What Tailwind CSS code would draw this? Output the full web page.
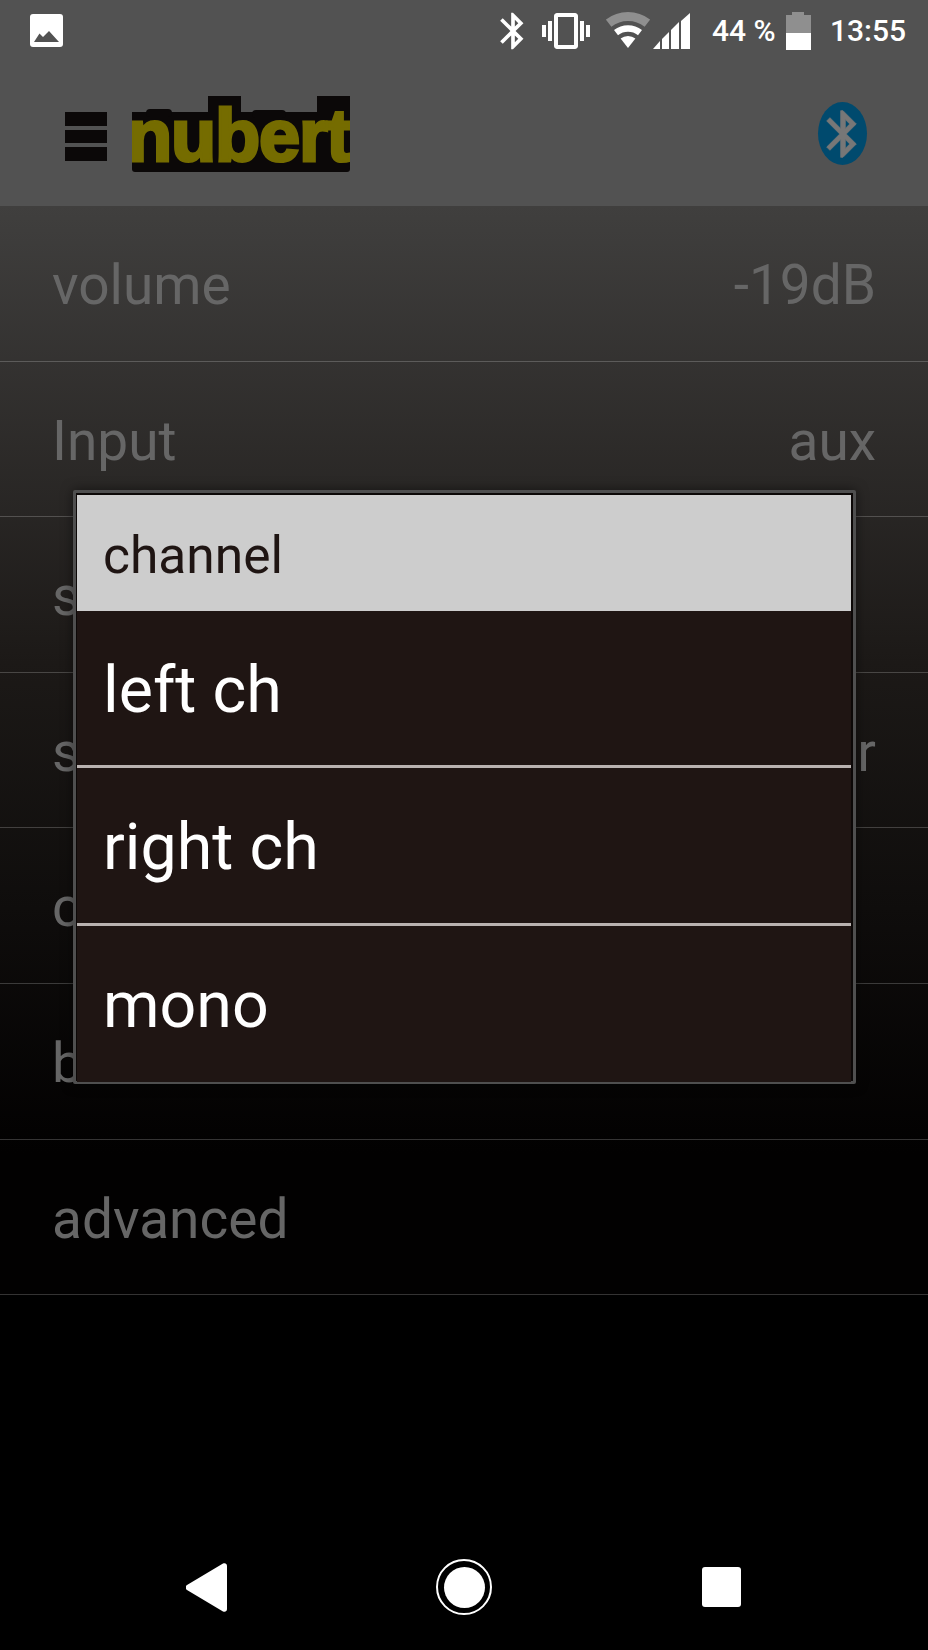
<!DOCTYPE html>
<html lang="en">
<head>
  <meta charset="UTF-8">
  <meta name="viewport" content="width=device-width, initial-scale=1.0">
  <title>nubert</title>
  <script src="https://cdn.jsdelivr.net/npm/@tailwindcss/browser@4"></script>
</head>
<body class="bg-black font-[Roboto,sans-serif]">
  <div class="relative w-[928px] h-[1650px] overflow-hidden flex flex-col bg-black">

    <!-- Status bar -->
    <div class="h-[62px] bg-[#525252] flex items-start text-white relative">
      <svg class="ml-[30px] mt-[14px]" width="33" height="33" viewBox="0 0 33 33">
        <rect width="33" height="33" rx="3" fill="#fff"/>
        <path d="M4 28 9.5 19.5 13 23 19 17 29 28Z" fill="#525252"/>
      </svg>
      <div class="ml-auto flex items-start">
        <svg class="mt-[9px]" width="44" height="44" viewBox="0 0 24 24" fill="#fff">
          <path d="M17.71 7.71L12 2h-1v7.59L6.41 5 5 6.41 10.59 12 5 17.59 6.41 19 11 14.41V22h1l5.71-5.71-4.3-4.29 4.3-4.29zM13 5.83l1.88 1.88L13 9.59V5.83zm1.88 10.46L13 18.17v-3.76l1.88 1.88z"/>
        </svg>
        <svg class="mt-[7px] ml-[7px]" width="48" height="48" viewBox="0 0 24 24" fill="#fff">
          <path d="M0 15h2V9H0v6zm3 2h2V7H3v10zm19-8v6h2V9h-2zm-3 8h2V7h-2v10zM16.5 3h-9C6.67 3 6 3.67 6 4.5v15c0 .83.67 1.5 1.5 1.5h9c.83 0 1.5-.67 1.5-1.5v-15c0-.83-.67-1.5-1.5-1.5zM16 19H8V5h8v14z"/>
        </svg>
        <svg class="mt-[12px] ml-[16px]" width="44" height="37" viewBox="0 0 44 37" fill="none">
          <path d="M2.6 11.2A31.5 31.5 0 0 1 41.4 11.2" stroke="#8f8f8f" stroke-width="9"/>
          <path d="M10 20.6A19.5 19.5 0 0 1 34 20.6" stroke="#fff" stroke-width="6.5"/>
          <path d="M22 36 14.6 26.5A12 12 0 0 1 29.4 26.5Z" fill="#fff"/>
        </svg>
        <svg class="mt-[13px] ml-[3px]" width="37" height="36" viewBox="0 0 37 36" fill="#fff">
          <path d="M0 36 7 28V36Z"/>
          <path d="M9 26 16 19V36H9Z"/>
          <path d="M18 17 26 9V36H18Z"/>
          <path d="M28 8 37 0V36H28Z"/>
        </svg>
        <span class="ml-[22px] mt-[11px] text-[30px] leading-[40px] font-medium w-[64px] whitespace-nowrap">44 %</span>
        <svg class="ml-[10px] mt-[12px]" width="25" height="38" viewBox="0 0 25 38">
          <path d="M6 0H18V3H25V21H0V3H6Z" fill="#8f8f8f"/>
          <rect y="21" width="25" height="17" fill="#fff"/>
        </svg>
        <span class="ml-[19px] mr-[22px] mt-[11px] text-[30px] leading-[40px] font-medium">13:55</span>
      </div>
    </div>

    <!-- Toolbar -->
    <div class="h-[144px] bg-[#525252] flex items-start">
      <div class="ml-[65px] mt-[50px] w-[42px] flex flex-col gap-[4px]">
        <div class="h-[14px] bg-[#0b0808]"></div>
        <div class="h-[13px] bg-[#0b0808]"></div>
        <div class="h-[14px] bg-[#0b0808]"></div>
      </div>
      <div class="relative ml-[25px] mt-[34px] w-[218px] h-[76px] overflow-hidden">
        <div class="absolute left-0 right-0 top-[16px] bottom-0 bg-[#0b0808] rounded-b-[3px]"></div>
        <div class="absolute left-[76px] top-0 w-[33px] h-[20px] bg-[#0b0808]"></div>
        <div class="absolute left-[185px] top-0 w-[33px] h-[20px] bg-[#0b0808]"></div>
        <div class="absolute left-[14px] top-[13px] w-[26px] h-[8px] rounded-full bg-[#0b0808]"></div>
        <div class="absolute left-[120px] top-[14px] w-[34px] h-[8px] rounded-full bg-[#0b0808]"></div>
        <span class="absolute left-[-5px] top-[-6px] text-[74px] leading-[92px] font-bold font-['Liberation_Sans',sans-serif] tracking-[-1.2px] text-[#756c00] [-webkit-text-stroke:3px_#756c00] whitespace-nowrap">nubert</span>
      </div>
      <div class="ml-auto mr-[61px] mt-[40px] relative w-[49px] h-[63px] rounded-[50%] bg-[#004a6e] flex items-center justify-center">
        <svg class="shrink-0" width="56" height="56" viewBox="0 0 24 24" fill="#777777" stroke="#777777" stroke-width="0.3">
          <path d="M17.71 7.71L12 2h-1v7.59L6.41 5 5 6.41 10.59 12 5 17.59 6.41 19 11 14.41V22h1l5.71-5.71-4.3-4.29 4.3-4.29zM13 5.83l1.88 1.88L13 9.59V5.83zm1.88 10.46L13 18.17v-3.76l1.88 1.88z"/>
        </svg>
      </div>
    </div>

    <!-- Settings list -->
    <div class="bg-linear-to-b/srgb from-[#403f3e] via-[#1c1917] via-[42%] to-[#020101] to-[87%] text-[#666666] text-[55px]">
      <div class="h-[155.6px] pt-[4px] px-[52px] flex items-center justify-between border-b border-white/20"><span>volume</span><span>-19dB</span></div>
      <div class="h-[155.6px] pt-[4px] px-[52px] flex items-center justify-between border-b border-white/20"><span>Input</span><span>aux</span></div>
      <div class="h-[155.6px] pt-[4px] px-[52px] flex items-center justify-between border-b border-white/20"><span>source</span></div>
      <div class="h-[155.6px] pt-[4px] px-[52px] flex items-center justify-between border-b border-white/20"><span>speaker</span><span>woofer</span></div>
      <div class="h-[155.6px] pt-[4px] px-[52px] flex items-center justify-between border-b border-white/20"><span>channel</span></div>
      <div class="h-[155.6px] pt-[4px] px-[52px] flex items-center justify-between border-b border-white/20"><span>balance</span></div>
      <div class="h-[155.6px] pt-[4px] px-[52px] flex items-center justify-between border-b border-white/20"><span>advanced</span></div>
    </div>

    <!-- Navigation bar -->
    <div class="mt-auto h-[126px] w-[774px] mx-auto grid grid-cols-3 items-center justify-items-center">
      <svg width="41" height="49" viewBox="0 0 41 49" fill="#fff">
        <path d="M37 .6 1 22a3 3 0 0 0 0 5L37 48.400c2 1 4 0 4-2.400V3c0-2.400-2-3.400-4-2.400Z"/>
      </svg>
      <div class="w-[56px] h-[56px] rounded-full border-[2px] border-white flex items-center justify-center">
        <div class="w-[41px] h-[41px] rounded-full bg-white"></div>
      </div>
      <div class="w-[39px] h-[40px] rounded-[3px] bg-white -ml-[2px]"></div>
    </div>

    <!-- Channel dialog -->
    <div class="absolute left-[73px] top-[490px] w-[783px] h-[594px] border-[3px] border-[#4f4f4f] rounded-[2px] bg-[#0c0807] pt-[2px] pl-[1px] pr-[2px] shadow-[0_0_12px_rgba(0,0,0,0.5)]">
      <div class="h-[116px] bg-[#cdcdcd] text-[#1f1513] text-[51.5px] pl-[26px] pt-[5px] flex items-center">channel</div>
      <div class="bg-[#1f1513] text-white text-[64.5px] h-[471px] flex flex-col">
        <div class="h-[157px] pl-[26px] pt-[5px] flex items-center border-b-[3px] border-[#b9b2b0]">left ch</div>
        <div class="h-[157.5px] pl-[26px] pt-[5px] flex items-center border-b-[3px] border-[#b9b2b0]">right ch</div>
        <div class="flex-1 pl-[26px] pt-[3px] flex items-center">mono</div>
      </div>
    </div>
  </div>
</body>
</html>
